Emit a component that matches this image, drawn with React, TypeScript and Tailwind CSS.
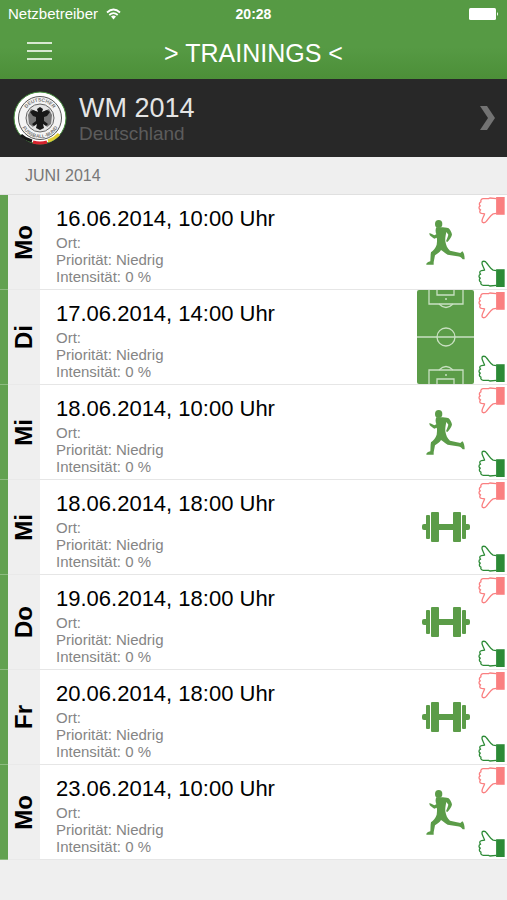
import React from "react";

type Kind = "run" | "pitch" | "gym";

interface Training {
  day: string;
  date: string;
  kind: Kind;
}

const trainings: Training[] = [
  { day: "Mo", date: "16.06.2014, 10:00 Uhr", kind: "run" },
  { day: "Di", date: "17.06.2014, 14:00 Uhr", kind: "pitch" },
  { day: "Mi", date: "18.06.2014, 10:00 Uhr", kind: "run" },
  { day: "Mi", date: "18.06.2014, 18:00 Uhr", kind: "gym" },
  { day: "Do", date: "19.06.2014, 18:00 Uhr", kind: "gym" },
  { day: "Fr", date: "20.06.2014, 18:00 Uhr", kind: "gym" },
  { day: "Mo", date: "23.06.2014, 10:00 Uhr", kind: "run" },
];

function Thumb({ down = false }: { down?: boolean }) {
  return (
    <svg
      viewBox="0 0 82 82"
      className={down ? "block size-[27px] -scale-y-100 text-[#fa7f80]" : "block size-[27px] text-[#2c8a36]"}
      aria-hidden="true"
    >
      <path
        d="M56 32 L46 31 C38 27 33 17 26 9 C22 2 12 2 12 9 C12 16 18 23 20 31 L11 32 C4 33 4 40 8 43 C1 45 2 53 7 55 C2 58 4 66 9 67 C7 73 11 77 16 77 L32 77 L36 79 L56 77"
        fill="none"
        stroke="currentColor"
        strokeWidth="4"
        strokeLinejoin="round"
      />
      <rect x="55" y="28" width="26" height="54" fill="currentColor" />
    </svg>
  );
}

function Runner() {
  return (
    <svg viewBox="0 0 117 135" className="block h-[45px] w-[39px]" fill="#5b9c48" aria-hidden="true">
      <ellipse cx="38" cy="12" rx="11" ry="12" />
      <path d="M31 22 L44 22 C52 22 62 23 68 25 C74 31 77 38 78 44 C75 53 70 60 64 66 L60 64 C62 57 66 50 67 44 L61 36 C59 46 57 56 58 64 C60 76 64 86 72 92 L103 99 L109 94 C113 97 116 106 116 118 L110 118 C106 112 101 110 94 109 L65 104 C57 100 51 94 45 90 C42 96 35 101 27 106 L23 127 L23 134 L1 134 C0 129 6 126 13 124 C14 115 13 105 15 97 C23 91 29 83 32 74 C33 64 34 57 32 53 L25 56 C19 52 14 49 11 45 L10 39 L16 41 L25 46 L31 43 C28 35 28 27 31 22 Z" />
    </svg>
  );
}

function Dumbbell() {
  return (
    <svg viewBox="0 0 48 32" className="block h-8 w-12" fill="#5b9c48" aria-hidden="true">
      <rect x="0" y="13" width="6" height="6" rx="2" />
      <rect x="4" y="4" width="4" height="24" rx="1" />
      <rect x="9" y="1" width="8" height="30" rx="1" />
      <rect x="16" y="13" width="16" height="6" />
      <rect x="31" y="1" width="8" height="30" rx="1" />
      <rect x="40" y="4" width="4" height="24" rx="1" />
      <rect x="42" y="13" width="6" height="6" rx="2" />
    </svg>
  );
}

function Pitch() {
  return (
    <svg viewBox="0 0 57 94" className="block h-[94px] w-[57px]" aria-hidden="true">
      <rect width="57" height="94" rx="2" fill="#5b9c48" />
      <g fill="none" stroke="#c9e0c2" strokeWidth="1.3">
        <path d="M0 47 H57 M12 0 V14 H46 V0 M20 0 V5 H37 V0 M12 94 V80 H46 V94 M20 94 V89 H37 V94" />
        <circle cx="29" cy="47" r="9" />
        <path d="M22 14 Q29 21 36 14 M22 80 Q29 73 36 80" />
      </g>
      <circle cx="29" cy="9" r="1" fill="#c9e0c2" />
      <circle cx="29" cy="85" r="1" fill="#c9e0c2" />
    </svg>
  );
}

function Crest() {
  return (
    <svg viewBox="0 0 54 54" className="block size-[54px] shrink-0" role="img" aria-label="Deutscher Fussball-Bund">
      <defs>
        <path id="crest-top" d="M10.500 27 A16.500 16.500 0 0 1 43.500 27" />
        <path id="crest-bottom" d="M7 27 A20 20 0 0 0 47 27" />
      </defs>
      <circle cx="27" cy="27" r="26" fill="#fff" stroke="#438b3a" strokeWidth="1" />
      <g fill="none" strokeWidth="3">
        <path d="M8 44 A25 25 0 0 0 19 50" stroke="#151515" />
        <path d="M20 51 A25 25 0 0 0 34 51" stroke="#d7232e" />
        <path d="M35 50 A25 25 0 0 0 46 43" stroke="#e2ce35" />
      </g>
      <circle cx="27" cy="27" r="21.500" fill="#f4f4f4" stroke="#555" strokeWidth="1" />
      <circle cx="27" cy="27" r="14" fill="#e4e4e4" stroke="#666" strokeWidth="1" />
      <g fill="#777" fontFamily="Liberation Sans, Arial, sans-serif" fontSize="5" fontWeight="700" textAnchor="middle">
        <text><textPath href="#crest-top" startOffset="50%">DEUTSCHER</textPath></text>
        <text><textPath href="#crest-bottom" startOffset="50%">FUSSBALL-BUND</textPath></text>
      </g>
      <path d="M25 21 L18 18 L15 24 L16 33 L20 36 L24 31 Z M29 21 L36 18 L39 24 L38 33 L34 36 L30 31 Z" fill="#777" />
      <path d="M24 18 L27 16 L30 18 L29 21 L34 19 L37 21 L34 25 L31 26 L31 30 L35 33 L33 35 L30 33 L31 37 L27 39 L23 37 L24 33 L21 35 L19 33 L23 30 L23 26 L20 25 L17 21 L20 19 L25 21 Z" fill="#171717" />
    </svg>
  );
}

function KindIcon({ kind }: { kind: Kind }) {
  if (kind === "run") return <Runner />;
  if (kind === "gym") return <Dumbbell />;
  return <Pitch />;
}

function TrainingRow({ day, date, kind }: Training) {
  return (
    <li className="flex h-[95px] bg-white">
      <div className="w-2 shrink-0 border-b border-[#8dbb80] bg-[#62a150]" />
      <div className="flex w-8 shrink-0 items-center justify-center border-b border-[#e9e9e9] bg-[#efefef]">
        <span className="rotate-180 text-2xl leading-8 font-bold text-black [writing-mode:vertical-rl]">{day}</span>
      </div>
      <div className="flex min-w-0 flex-1 border-b border-[#e6e6e6]">
        <div className="flex min-w-0 flex-1 flex-col pt-2.5 pl-4">
          <h3 className="pb-px text-[22px] leading-7 text-black">{date}</h3>
          <p className="text-[15px] leading-[17px] text-[#858585]">Ort:</p>
          <p className="text-[15px] leading-[17px] text-[#858585]">Priorität: Niedrig</p>
          <p className="text-[15px] leading-[17px] text-[#858585]">Intensität: 0 %</p>
        </div>
        <div className="flex w-[58px] shrink-0 items-center">
          <div className="flex w-[57px] justify-center">
            <KindIcon kind={kind} />
          </div>
        </div>
        <div className="flex w-8 shrink-0 flex-col items-center justify-between py-0.5">
          <button type="button" aria-label="Absagen"><Thumb down /></button>
          <button type="button" aria-label="Zusagen"><Thumb /></button>
        </div>
      </div>
    </li>
  );
}

export default function App() {
  return (
    <div className="min-h-screen bg-[#efefef] font-['Liberation_Sans',Arial,sans-serif]">
      <header className="bg-linear-to-b from-[#569a44] from-60% to-[#4c8f38] text-white">
        <div className="grid h-7 grid-cols-3 items-center px-2 text-[15px]">
          <div className="flex items-center gap-2">
            <span>Netzbetreiber</span>
            <svg viewBox="0 0 15 12" className="h-3 w-[15px]" fill="none" stroke="#fff" strokeWidth="1.800" aria-hidden="true">
              <path d="M1 4.500 Q7.500 -1.500 14 4.500 M3.300 7 Q7.500 3.200 11.700 7" />
              <path d="M5 8.500 Q7.500 6.500 10 8.500 L7.500 11.500 Z" fill="#fff" stroke="none" />
            </svg>
          </div>
          <span className="text-center text-sm font-bold">20:28</span>
          <svg viewBox="0 0 30 12" className="h-3 w-[30px] justify-self-end" fill="#fff" aria-hidden="true">
            <rect width="27" height="12" rx="1.500" />
            <path d="M28 4 Q30 6 28 8 Z" />
          </svg>
        </div>
        <div className="grid h-[51px] grid-cols-[52px_1fr_52px] items-center pb-0.5">
          <button type="button" aria-label="Menü" className="flex flex-col gap-1.5 justify-self-end pb-1">
            <span className="h-0.5 w-[25px] bg-[#d8e9d2]" />
            <span className="h-0.5 w-[25px] bg-[#d8e9d2]" />
            <span className="h-0.5 w-[25px] bg-[#d8e9d2]" />
          </button>
          <h1 className="text-center text-[25px] leading-8">&gt; TRAININGS &lt;</h1>
        </div>
      </header>
      <button type="button" className="flex h-[78px] w-full items-center bg-[#282828] pr-3 pl-[13px] text-left">
        <Crest />
        <span className="flex flex-1 flex-col pt-1 pl-3">
          <span className="text-[27px] leading-7 text-[#e4e4e4]">WM 2014</span>
          <span className="text-[19px] leading-6 text-[#5c5c5c]">Deutschland</span>
        </span>
        <svg viewBox="0 0 15 26" className="h-[26px] w-[15px]" fill="#737373" aria-hidden="true">
          <path d="M0 1 H7 L15 13 L7 25 H0 L8 13 Z" />
        </svg>
      </button>
      <main>
        <h2 className="flex h-[38px] items-center border-b border-[#e0e0e0] pl-[25px] text-base text-[#777]">JUNI 2014</h2>
        <ul>
          {trainings.map((t) => (
            <TrainingRow key={t.date} {...t} />
          ))}
        </ul>
      </main>
    </div>
  );
}
